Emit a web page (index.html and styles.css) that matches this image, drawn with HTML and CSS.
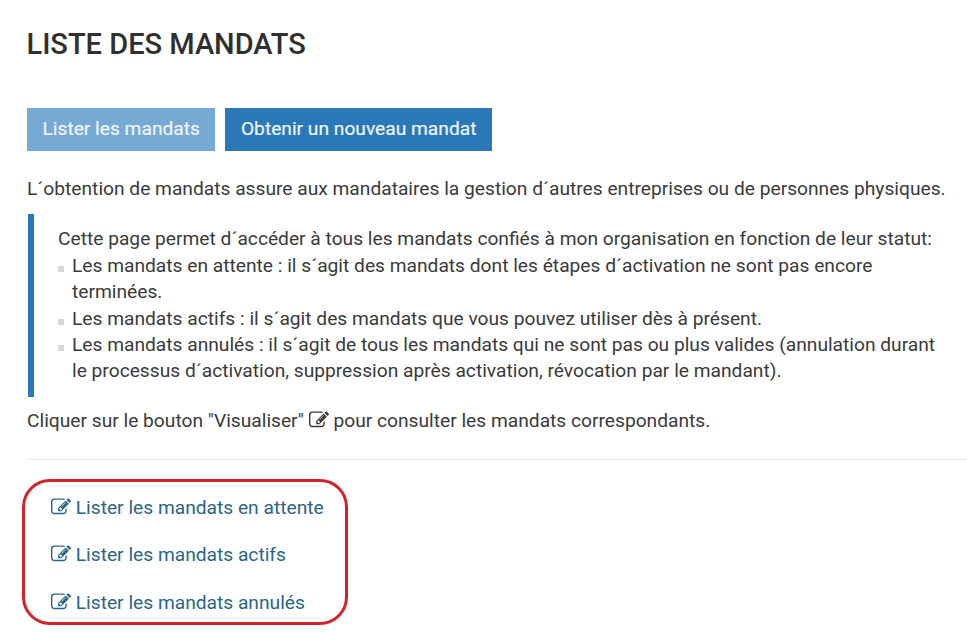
FILE: index.html
```html
<!DOCTYPE html>
<html lang="fr">
<head>
  <meta charset="UTF-8">
  <title>Liste des mandats</title>
  <link rel="stylesheet" href="styles.css">
</head>
<body>

  <svg class="sprite" aria-hidden="true">
    <symbol id="icon-edit" viewBox="0 0 1792 1792">
      <path d="M888 1184l116-116-152-152-116 116v56h96v96h56zm440-720q-16-16-33 1l-350 350q-17 17-1 33t33-1l350-350q17-17 1-33zm80 594v190q0 119-84.5 203.5t-203.5 84.5h-832q-119 0-203.5-84.5t-84.5-203.5v-832q0-119 84.5-203.5t203.5-84.5h832q63 0 117 25 15 7 18 23 3 17-9 29l-49 49q-14 14-32 8-23-6-45-6h-832q-66 0-113 47t-47 113v832q0 66 47 113t113 47h832q66 0 113-47t47-113v-126q0-13 9-22l64-64q15-15 35-7t20 29zm-96-738l288 288-672 672h-288v-288zm444 132l-92 92-288-288 92-92q28-28 68-28t68 28l152 152q28 28 28 68t-28 68z"/>
    </symbol>
  </svg>

  <div class="page">
    <h1>LISTE DES MANDATS</h1>

    <div class="buttons">
      <a class="btn btn-current" href="#">Lister les mandats</a>
      <a class="btn" href="#">Obtenir un nouveau mandat</a>
    </div>

    <p class="intro">L´obtention de mandats assure aux mandataires la gestion d´autres entreprises ou de personnes physiques.</p>

    <div class="note">
      <p>Cette page permet d´accéder à tous les mandats confiés à mon organisation en fonction de leur statut:</p>
      <ul>
        <li>Les mandats en attente : il s´agit des mandats dont les étapes d´activation ne sont pas encore terminées.</li>
        <li>Les mandats actifs : il s´agit des mandats que vous pouvez utiliser dès à présent.</li>
        <li>Les mandats annulés : il s´agit de tous les mandats qui ne sont pas ou plus valides (annulation durant le processus d´activation, suppression après activation, révocation par le mandant).</li>
      </ul>
    </div>

    <p class="hint">Cliquer sur le bouton "Visualiser" <svg class="icon"><use href="#icon-edit"/></svg> pour consulter les mandats correspondants.</p>

    <hr>

    <div class="links">
      <a href="#"><svg class="icon"><use href="#icon-edit"/></svg> Lister les mandats en attente</a>
      <a href="#"><svg class="icon"><use href="#icon-edit"/></svg> Lister les mandats actifs</a>
      <a href="#"><svg class="icon"><use href="#icon-edit"/></svg> Lister les mandats annulés</a>
      <div class="highlight"></div>
    </div>
  </div>

</body>
</html>
```

FILE: styles.css
```css
* { margin: 0; padding: 0; box-sizing: border-box; }

body {
  font-family: 'Roboto', sans-serif;
  font-size: 19.2px;
  line-height: 26.4px;
  background-color: white;
  color: #3a3a3a;
}

.sprite {
  display: none;
}

.page {
  padding: 27px 0 20px 27px;
}

h1 {
  margin-left: -0.5px;
  font-size: 29px;
  line-height: 34px;
  font-weight: 500;
  color: #2f2f2f;
}

.buttons {
  display: flex;
  gap: 10px;
  margin-top: 47px;
}

.btn {
  padding: 8px 15.5px 8.6px;
  background-color: #2a78b7;
  color: #eef5fb;
  font-size: 19.2px;
  -webkit-text-stroke: 0.2px #eef5fb;
  text-decoration: none;
}

.btn-current {
  background-color: #76a9d4;
}

.intro {
  margin: 25px 0 0;
}

.note {
  margin: 12px 0 0 1px;
  padding: 12px 20px 12px 24px;
  border-left: 6px solid #2a78b7;
}

.note ul {
  list-style: none;
}

.note li {
  position: relative;
  padding-left: 14px;
}

.note li::before {
  content: "";
  position: absolute;
  left: 0;
  top: 13px;
  width: 6px;
  height: 6px;
  background-color: #d8d8d8;
}

.hint {
  margin: 11.6px 0 0;
}

.icon {
  width: 20px;
  height: 20px;
  fill: currentColor;
  vertical-align: -3px;
}

hr {
  margin: 24.4px 0 0 1px;
  border: none;
  border-top: 1px solid #e8e8e8;
}

.links {
  position: relative;
  display: flex;
  flex-direction: column;
  gap: 20.8px;
  margin-top: 35px;
  padding-left: 24px;
}

.links a {
  color: #2a6585;
  text-decoration: none;
}

.highlight {
  position: absolute;
  left: -5px;
  top: -16px;
  width: 326px;
  height: 146px;
  border: 3px solid #d3232a;
  border-radius: 28px;
}
```
